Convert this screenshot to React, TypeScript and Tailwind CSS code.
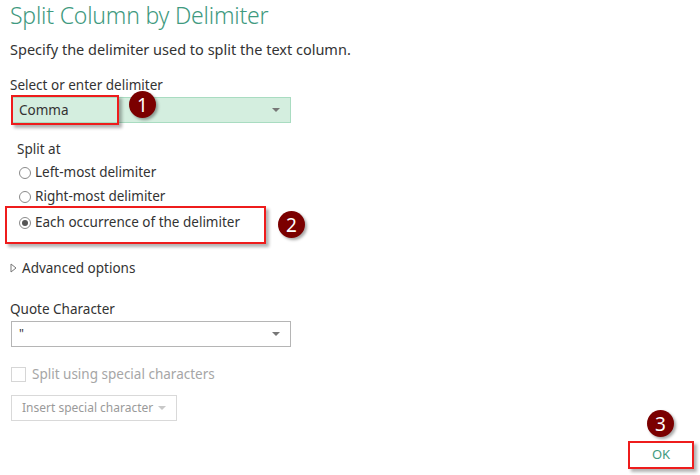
import React from "react";

function Badge({ n }: { n: number }) {
  return (
    <div className="w-[27px] h-[27px] rounded-full bg-[#7b0000] text-white flex items-center justify-center shadow-[2px_2px_3px_rgba(0,0,0,0.35)]">
      <span className="text-[19px] leading-[14px]">{n}</span>
    </div>
  );
}

function Caret({ color = "#777" }: { color?: string }) {
  return (
    <svg width="8" height="4" viewBox="0 0 8 4">
      <path d="M0 0 L8 0 L4 4 Z" fill={color} />
    </svg>
  );
}

function Radio({ checked }: { checked?: boolean }) {
  return (
    <span className="w-[12px] h-[12px] rounded-full border border-[#8a8a8a] bg-white flex items-center justify-center shrink-0">
      {checked && <span className="w-[6px] h-[6px] rounded-full bg-[#555]" />}
    </span>
  );
}

export default function App() {
  return (
    <div
      className="relative w-[700px] h-[475px] bg-white overflow-hidden text-[#333]"
      style={{ fontFamily: '"Noto Sans", "Open Sans", sans-serif' }}
    >
      <div className="px-[10px] pt-[1px]">
        <h1 className="text-[23px] font-light leading-[28px] text-[#3f9a80] tracking-[-0.2px]">
          Split Column by Delimiter
        </h1>
        <p className="mt-[10px] text-[14.5px] leading-[20px] text-[#333]">
          Specify the delimiter used to split the text column.
        </p>

        <div className="mt-[18px] text-[13.5px] leading-[16px] text-[#333]">Select or enter delimiter</div>
        <div className="relative mt-[4px] ml-[1px] w-[280px] h-[26px] bg-[#d4eedf] border border-[#a9dcc1] flex items-center justify-between pl-[7px] pr-[10px]">
          <span className="text-[13.5px] text-[#333]">Comma</span>
          <Caret />
          <div className="absolute left-[-1px] top-[-3px] w-[108px] h-[30px] border-2 border-[#ee1c1c] shadow-[3px_3px_3px_rgba(0,0,0,0.3)]" />
          <div className="absolute left-[117px] top-[-7px]">
            <Badge n={1} />
          </div>
        </div>

        <div className="ml-[7px] mt-[17px] flex flex-col">
          <div className="text-[13.5px] leading-[18px]">Split at</div>
          <label className="flex items-center gap-[4px] mt-[5px] ml-[2px] h-[19px] text-[13.5px]">
            <Radio /> Left-most delimiter
          </label>
          <label className="flex items-center gap-[4px] mt-[5px] ml-[2px] h-[19px] text-[13.5px]">
            <Radio /> Right-most delimiter
          </label>
          <div className="relative mt-[7px]">
            <label className="flex items-center gap-[4px] ml-[2px] h-[19px] text-[13.5px]">
              <Radio checked /> Each occurrence of the delimiter
            </label>
            <div className="absolute left-[-12px] top-[-7px] w-[261px] h-[38px] border-2 border-[#ee1c1c] shadow-[3px_3px_3px_rgba(0,0,0,0.3)]" />
            <div className="absolute left-[261px] top-[-2px]">
              <Badge n={2} />
            </div>
          </div>
        </div>

        <div className="mt-[26px] flex items-center gap-[5px] text-[13.5px]">
          <svg width="7" height="10" viewBox="0 0 7 10">
            <path d="M1 1 L6 5 L1 9 Z" fill="none" stroke="#777" strokeWidth="1" />
          </svg>
          Advanced options
        </div>

        <div className="mt-[22px] text-[13.5px] leading-[18px]">Quote Character</div>
        <div className="mt-[3px] ml-[1px] w-[280px] h-[26px] bg-white border border-[#b5b5b5] flex items-center justify-between pl-[7px] pr-[10px]">
          <span className="text-[12px] text-[#333]">"</span>
          <Caret />
        </div>

        <div className="mt-[17px] ml-[1px] flex items-center gap-[6px] text-[13.5px] text-[#a6a6a6]">
          <span className="w-[15px] h-[15px] border border-[#d6d6d6] bg-white" />
          Split using special characters
        </div>
        <div className="mt-[10px] ml-[1px] w-[166px] h-[26px] border border-[#d9d9d9] flex items-center justify-between pl-[10px] pr-[10px] text-[12px] text-[#9a9a9a] whitespace-nowrap">
          Insert special character
          <Caret color="#c8c8c8" />
        </div>
      </div>

      <div className="absolute right-[6px] bottom-[6px] flex flex-col items-end">
        <div className="mr-[20px] mb-[4px]">
          <Badge n={3} />
        </div>
        <div className="w-[66px] h-[28px] border-2 border-[#ee1c1c] shadow-[3px_3px_3px_rgba(0,0,0,0.3)] flex items-center justify-center text-[13px] text-[#3f9a80]">
          OK
        </div>
      </div>
    </div>
  );
}
